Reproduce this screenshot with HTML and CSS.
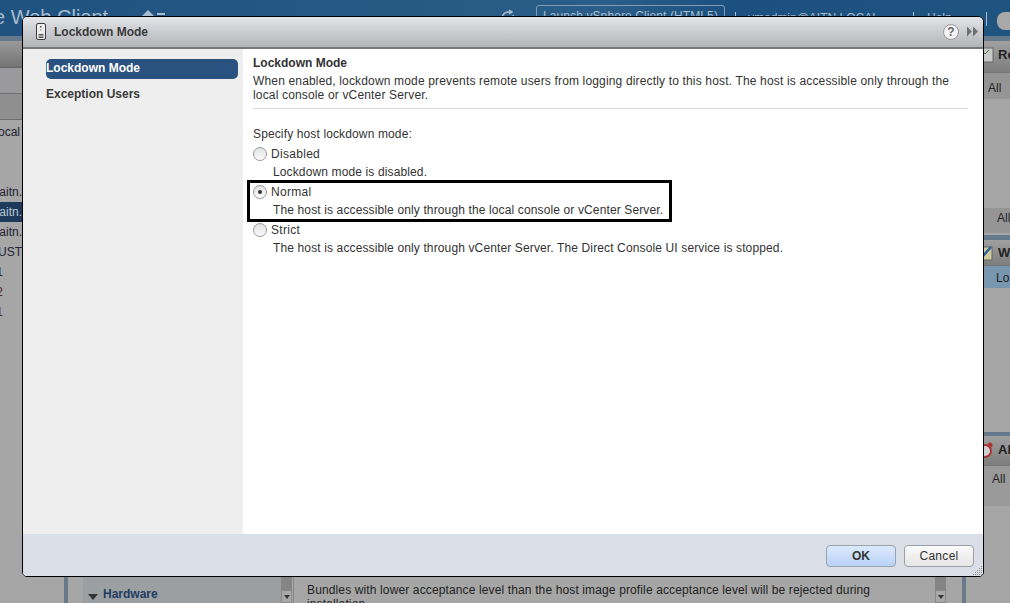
FILE: index.html
```html
<!DOCTYPE html>
<html lang="en">
<head>
<meta charset="utf-8">
<title>Lockdown Mode</title>
<link rel="stylesheet" href="styles.css">
</head>
<body>
<div class="backdrop">
  <header class="topbar">
    <div class="brand">
      <span class="brand-name">e Web Client</span>
      <svg class="brand-icon" width="26" height="14" viewBox="0 0 26 14"><path d="M1 12 7 6l6 6z" fill="#a9bccd"/><path d="M16 9h8v2h-8zM16 13h8v2h-8z" fill="#a9bccd"/></svg>
    </div>
    <div class="top-links">
      <svg class="refresh" width="16" height="16" viewBox="0 0 16 16"><path d="M3 12A6 6 0 0 1 8 3h3M9 1l3 2-3 2M13 6a6 6 0 0 1-2 7" fill="none" stroke="#a9bccd" stroke-width="1.500"/></svg>
      <span class="launch">Launch vSphere Client (HTML5)</span>
      <span class="sep"></span>
      <span class="top-link user">vmadmin@AITN.LOCAL</span>
      <span class="sep"></span>
      <span class="top-link help">Help</span>
      <span class="sep"></span>
      <span class="search"></span>
    </div>
  </header>
  <div class="strip"></div>
  <main class="workspace">
    <aside class="left-col">
      <div class="left-head"></div>
      <div class="left-row tone-a"></div>
      <div class="left-row tone-b"></div>
      <ul class="tree">
        <li class="t-local">local</li>
        <li class="t-gap"></li>
        <li>vmaitn.</li>
        <li class="selected">vmaitn.</li>
        <li>vmaitn.</li>
        <li>CLUST</li>
        <li class="digit">vm1</li>
        <li class="digit dark-red">vm2</li>
        <li class="digit dark-red">vm1</li>
      </ul>
    </aside>
    <section class="center-col">
      <div class="bottom-panel">
        <div class="bar"></div>
        <div class="hw-pane">
          <span class="caret"></span><span class="hw-label">Hardware</span>
          <div class="scroll"><span class="scroll-btn"></span></div>
        </div>
        <div class="detail-pane">
          <p class="bundle">Bundles with lower acceptance level than the host image profile acceptance level will be rejected during installation.</p>
          <div class="scroll"><span class="scroll-btn"></span></div>
        </div>
        <div class="bar bar-right"></div>
      </div>
    </section>
    <aside class="right-col">
      <div class="r-head r-first">
        <svg class="r-icon" width="14" height="18" viewBox="0 0 14 18"><rect x="1" y="3" width="12" height="14" fill="#c9c9c9" stroke="#666"/><path d="M3 7l2 2 4-4" stroke="#4c7a3e" fill="none"/></svg>
        <span>Recent</span>
      </div>
      <div class="r-filter"><span>All</span></div>
      <div class="r-space"></div>
      <div class="r-foot"><span>All</span></div>
      <div class="r-head r-second">
        <svg class="r-icon" width="14" height="16" viewBox="0 0 14 16"><rect x="0" y="2" width="12" height="13" fill="#cfc99b" stroke="#666"/><path d="M3 11 11 2" stroke="#2f5f9e" stroke-width="2.5"/></svg>
        <span>Work</span>
      </div>
      <div class="r-active"><span>Lo</span></div>
      <div class="r-space2"></div>
      <div class="r-head r-third">
        <svg class="r-icon" width="14" height="16" viewBox="0 0 14 16"><circle cx="5" cy="9" r="6" fill="#cfcfcf" stroke="#a33" stroke-width="2"/><circle cx="10" cy="3" r="2.5" fill="#a33"/></svg>
        <span>Alarms</span>
      </div>
      <div class="r-filter r-filter-last"><span>All</span></div>
    </aside>
  </main>
</div>

<div class="modal" role="dialog" aria-label="Lockdown Mode">
  <div class="modal-title">
    <svg class="host-icon" width="10" height="17" viewBox="0 0 10 17">
      <rect x="0.5" y="0.5" width="9" height="16" rx="1.5" fill="#ececec" stroke="#3d3d3d"/>
      <path d="M2.500 11.500h5M2.500 13h5M2.500 14.500h5" stroke="#555"/>
      <rect x="4" y="3" width="1.500" height="1.500" fill="#555"/>
      <rect x="4" y="6.500" width="1.500" height="1" fill="#888"/>
    </svg>
    <span class="title-text">Lockdown Mode</span>
    <span class="title-tools">
      <span class="help-btn">?</span>
      <svg width="11" height="11" viewBox="0 0 11 11"><path d="M0 0.500 4.800 5.500 0 10.500zM6 0.500 11 5.500 6 10.500z" fill="#6f6f70"/></svg>
    </span>
  </div>
  <div class="modal-body">
    <nav class="side-nav">
      <a class="nav-item active">Lockdown Mode</a>
      <a class="nav-item">Exception Users</a>
    </nav>
    <section class="content">
      <h1 class="content-title">Lockdown Mode</h1>
      <p class="content-desc">When enabled, lockdown mode prevents remote users from logging directly to this host. The host is accessible only through the local console or vCenter Server.</p>
      <hr class="rule">
      <p class="specify">Specify host lockdown mode:</p>
      <div class="option">
        <div class="option-line"><span class="radio"></span><span class="option-label">Disabled</span></div>
        <p class="option-desc">Lockdown mode is disabled.</p>
      </div>
      <div class="option highlight">
        <div class="option-line"><span class="radio checked"></span><span class="option-label">Normal</span></div>
        <p class="option-desc">The host is accessible only through the local console or vCenter Server.</p>
      </div>
      <div class="option">
        <div class="option-line"><span class="radio"></span><span class="option-label">Strict</span></div>
        <p class="option-desc">The host is accessible only through vCenter Server. The Direct Console UI service is stopped.</p>
      </div>
    </section>
  </div>
  <footer class="modal-foot">
    <button class="btn primary" type="button">OK</button>
    <button class="btn" type="button">Cancel</button>
    <svg class="grip" width="11" height="11" viewBox="0 0 11 11"><path d="M9 1h1v1H9zM7 3h1v1H7zM9 3h1v1H9zM5 5h1v1H5zM7 5h1v1H7zM9 5h1v1H9zM3 7h1v1H3zM5 7h1v1H5zM7 7h1v1H7zM9 7h1v1H9zM1 9h1v1H1zM3 9h1v1H3zM5 9h1v1H5zM7 9h1v1H7zM9 9h1v1H9z" fill="#8a8d91"/></svg>
  </footer>
</div>
</body>
</html>
```

FILE: styles.css
```css
* { box-sizing: border-box; }
html, body { margin: 0; height: 100%; }
body {
  width: 1010px;
  height: 603px;
  overflow: hidden;
  position: relative;
  font-family: "Liberation Sans", Arial, sans-serif;
  font-size: 12px;
  color: #333;
  background: #a6a6a6;
}
p, h1, ul { margin: 0; padding: 0; }

/* Dimmed page behind the dialog */
.backdrop { display: flex; flex-direction: column; height: 603px; }
.topbar {
  height: 36px;
  flex: none;
  display: flex;
  justify-content: space-between;
  background: linear-gradient(100deg, #1f527f 0, #2a5e88 60%, #1c5080 72%, #1f5480 100%);
  color: #a9bccd;
  overflow: hidden;
}
.brand { display: flex; align-items: flex-start; }
.brand-name { font-size: 20px; line-height: 26px; margin: 4px 0 0 -6px; white-space: nowrap; }
.brand-icon { margin: 4px 0 0 33px; }
.top-links { display: flex; align-items: flex-start; padding-top: 5px; }
.refresh { margin: 4px 20px 0 0; flex: none; }
.launch {
  width: 189px; height: 24px; border: 1px solid #7e9cb6; border-radius: 3px;
  text-align: center; line-height: 20px; white-space: nowrap; overflow: hidden;
  letter-spacing: .1px;
}
.sep { width: 1px; height: 14px; margin-top: 7px; background: #a9bccd; }
.top-link { line-height: 24px; margin-top: 1px; white-space: nowrap; }
.launch + .sep { margin-left: 10px; }
.user { margin-left: 12px; width: 165px; }
.help { margin-left: 13px; width: 59px; }
.search { width: 13px; height: 18px; margin: 7px 0 0 10px; border-radius: 8px 0 0 8px; background: #a8a8a8; }
.strip { height: 5px; flex: none; background: #64798b; }

.workspace { flex: 1; display: grid; grid-template-columns: 24px 1fr 26px; min-height: 0; }

.left-col { overflow: hidden; }
.left-head { height: 27px; background: linear-gradient(#9a9a9a, #747474); border-bottom: 1px solid #666; }
.left-row { height: 26px; border-bottom: 1px solid #6f6f6f; }
.tone-a { background: #9a9a9d; }
.tone-b { background: #8f8f8f; }
.tree { list-style: none; padding-top: 2px; }
.tree li {
  height: 20px; line-height: 20px; white-space: nowrap; padding-right: 2px;
  display: flex; justify-content: flex-end; color: #222233;
}
.tree .t-local { padding-right: 4px; }
.tree .t-gap { height: 40px; }
.tree .selected { background: #1d3a5c; color: #b9c6d4; }
.tree .digit { padding-right: 21px; }
.tree .dark-red { color: #5b2230; }

.center-col { display: flex; flex-direction: column; justify-content: flex-end; min-width: 0; }
.bottom-panel { height: 40px; display: flex; overflow: hidden; }
.bar { width: 4px; margin-left: 40px; background: #67798a; flex: none; }
.bar-right { margin-left: 16px; margin-right: 18px; }
.hw-pane {
  width: 209px; margin: 0 1px 0 15px; flex: none; display: flex; align-items: flex-start;
  padding-top: 24px; padding-left: 5px; background: #9b9fa1; position: relative;
}
.caret { width: 0; height: 0; margin: 7px 5px 0 0; border: 5px solid transparent; border-top: 6px solid #333; border-bottom: 0; }
.hw-label { font-weight: bold; color: #1f3c62; }
.scroll { width: 11px; height: 100%; margin-left: auto; background: #858585; display: flex; flex-direction: column; justify-content: flex-end; flex: none; }
.hw-pane .scroll { position: absolute; right: 0; top: 0; }
.scroll-btn { display: flex; justify-content: center; padding-top: 4px; height: 13px; background: #a8a8a8; border: 1px solid #8a8a8a; }
.scroll-btn::after { content: ""; width: 0; height: 0; border: 3px solid transparent; border-top: 4px solid #333; border-bottom: 0; }
.detail-pane { flex: 1; display: flex; background: #a6a6a6; border-left: 1px solid #888; padding-left: 13px; min-width: 0; }
.bundle { width: 570px; padding-top: 20px; line-height: 14px; color: #222; flex: none; letter-spacing: .13px; }

.right-col { overflow: hidden; margin-left: -1px; }
.r-head {
  height: 28px; display: flex; align-items: center; gap: 1px;
  font-weight: bold; color: #222; white-space: nowrap;
  background: linear-gradient(#a0a0a0, #7d7d7d); border-bottom: 1px solid #777;
}
.r-head span { margin-left: 3px; font-size: 13px; }
.r-icon { flex: none; margin-left: -3px; }
.r-first { height: 32px; padding-bottom: 5px; }
.r-filter { height: 26px; line-height: 30px; padding-left: 5px; background: #959595; color: #222; white-space: nowrap; }
.r-space { height: 109px; background: #a6a6a6; }
.r-foot { height: 25px; line-height: 20px; padding-left: 14px; background: #959595; color: #222; }
.r-second { margin-top: 2px; border-top: 5px solid #64798b; height: 31px; }
.r-active { height: 22px; line-height: 24px; padding-left: 13px; background: #7897ae; color: #1c1c1c; }
.r-space2 { height: 144px; }
.r-third { border-top: 4px solid #64798b; height: 34px; padding-bottom: 2px; }
.r-filter-last { padding-left: 9px; height: 40px; line-height: 27px; background: #9a9a9a; }

/* Dialog */
.modal {
  position: absolute;
  left: 22px; top: 16px;
  width: 962px; height: 561px;
  display: flex; flex-direction: column;
  background: #fff;
  border: 1px solid #000;
  border-radius: 5px 6px 5px 5px;
  overflow: hidden;
}
.modal-title {
  height: 32px; flex: none;
  display: flex; align-items: center;
  padding: 0 5px 1px 13px;
  background: linear-gradient(#e2e4e8, #b3b4b7);
  border-bottom: 2px solid #77787a;
}
.host-icon { flex: none; }
.title-text { margin-left: 8px; font-weight: bold; color: #3a3a3a; }
.title-tools { margin-left: auto; display: flex; align-items: center; gap: 8px; }
.help-btn {
  width: 16px; height: 16px; border-radius: 50%;
  background: #f3f3f3; border: 1px solid #9a9a9a;
  font-weight: bold; font-size: 12px; line-height: 14px; text-align: center; color: #6a6a6a;
}

.modal-body { flex: 1; display: flex; min-height: 0; }
.side-nav { width: 220px; flex: none; background: #eee; padding: 10px 5px 0 23px; display: flex; flex-direction: column; gap: 6px; }
.nav-item { display: block; height: 20px; line-height: 19px; font-weight: bold; color: #3a3a3a; border-radius: 5px; }
.nav-item.active { background: #2a5280; color: #fff; }
.content { flex: 1; padding: 7px 15px 0 10px; background: #fff; letter-spacing: .13px; }
.content-title { font-size: 12px; line-height: 14px; font-weight: bold; color: #333; margin-bottom: 4px; letter-spacing: 0; }
.content-desc { line-height: 14px; width: 710px; letter-spacing: .16px; }
.rule { margin: 6px 0 18px; border: 0; border-top: 1px solid #dcdcdc; }
.specify { line-height: 14px; margin-bottom: 4px; }
.option { height: 36px; margin: 0 0 2px -3px; padding-left: 3px; padding-top: 1px; }
.option-line { display: flex; align-items: center; gap: 4px; height: 16px; }
.option-label { letter-spacing: .3px; }
.option-desc { margin: 3px 0 0 20px; line-height: 14px; white-space: nowrap; }
.highlight { width: 419px; outline: 3px solid #000; }
.radio {
  width: 14px; height: 14px; border-radius: 50%; flex: none; position: relative;
  border: 1px solid #9a9a9a;
  background: linear-gradient(#e2e2e2, #fbfbfb);
}
.radio.checked::after {
  content: ""; position: absolute; left: 4px; top: 4px;
  width: 4px; height: 4px; border-radius: 50%; background: #333;
}

.modal-foot {
  height: 42px; flex: none; position: relative;
  display: flex; justify-content: flex-end; align-items: flex-start; gap: 8px;
  padding: 11px 9px 0 0;
  background: #dadee6;
}
.btn {
  width: 70px; height: 22px; padding: 0;
  font: 12px "Liberation Sans", Arial, sans-serif; color: #333;
  letter-spacing: .3px;
  border: 1px solid #a0a0a0; border-radius: 4px;
  background: linear-gradient(#fafafa, #e6e6e6);
}
.btn.primary { font-weight: bold; background: linear-gradient(#dceafc, #b9d2f8); border-color: #9aa3ad; letter-spacing: 0; }
.grip { position: absolute; right: 0; bottom: 0; }
```
